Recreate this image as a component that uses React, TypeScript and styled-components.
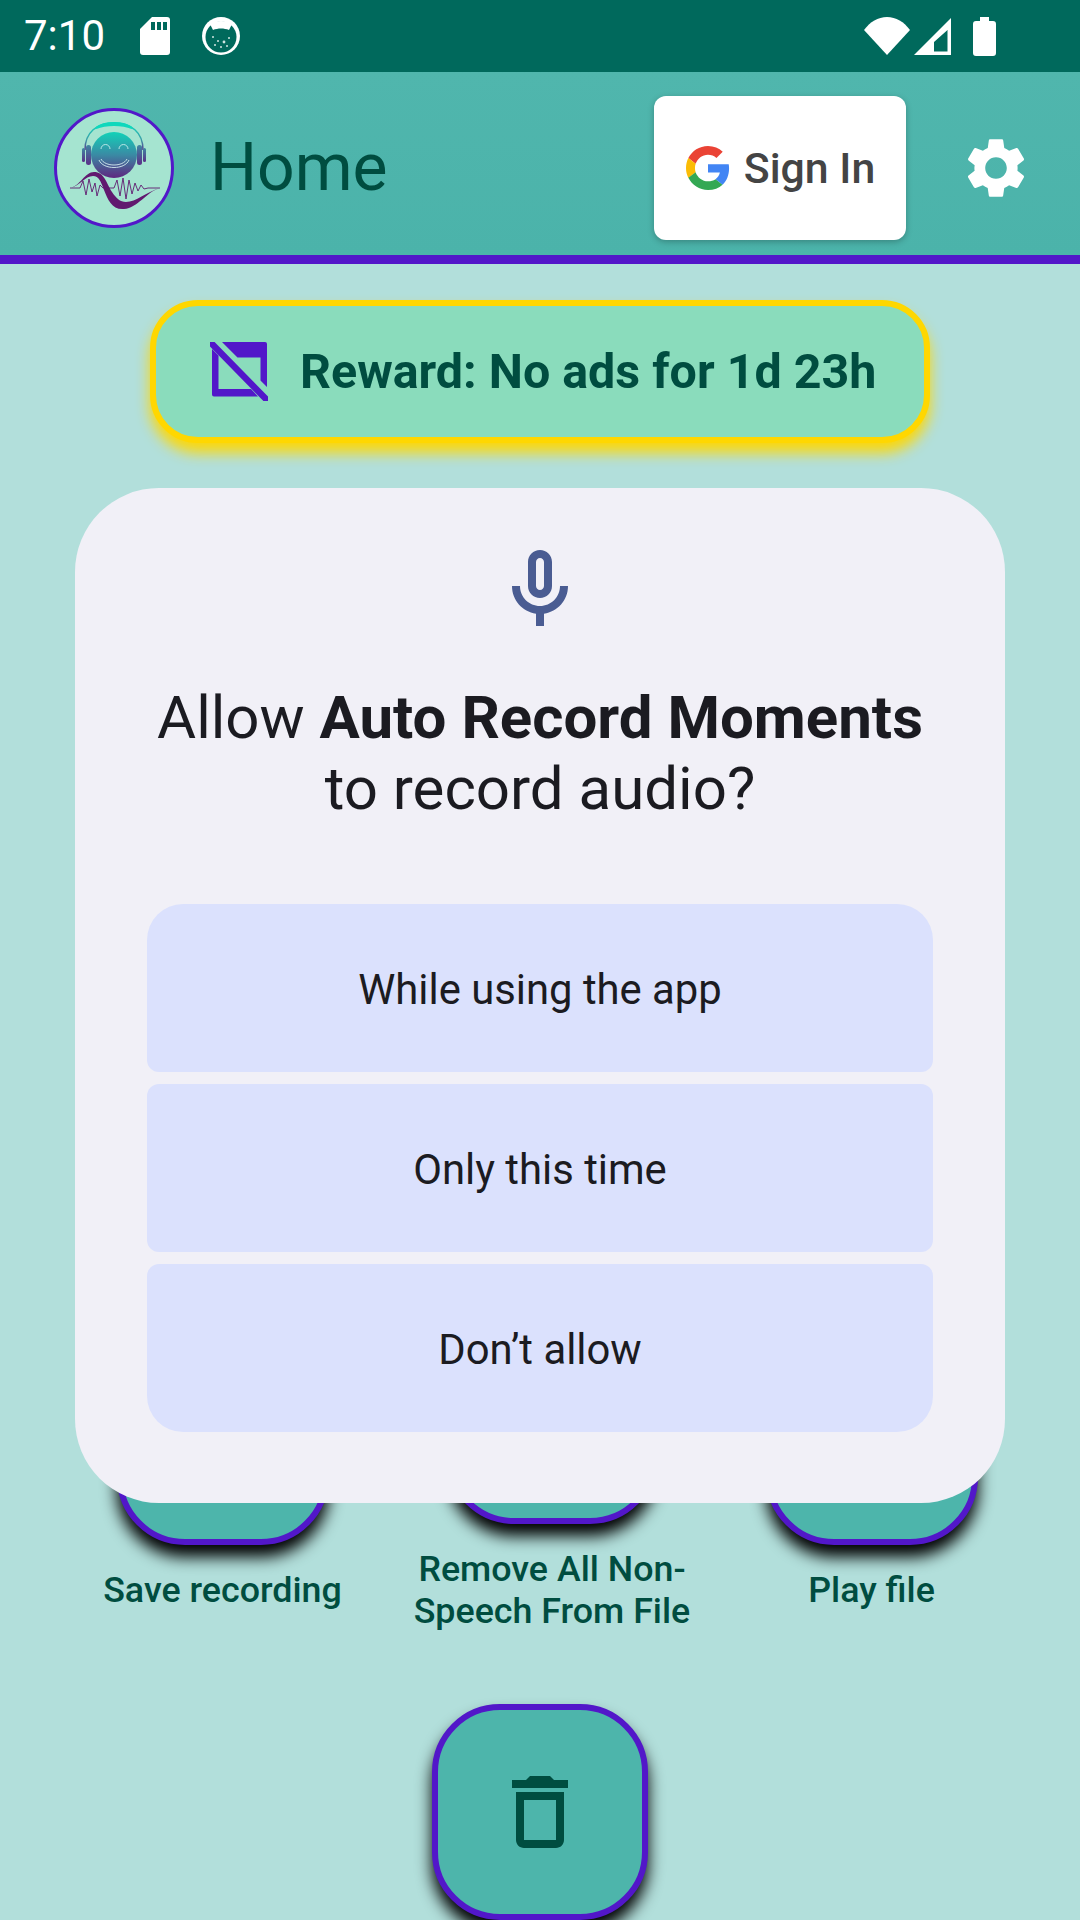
import React from "react";
import styled, { createGlobalStyle } from "styled-components";

const Global = createGlobalStyle`
  html, body { margin: 0; padding: 0; background: #b2dfdb; }
  * { box-sizing: border-box; }
`;

const Screen = styled.div`
  position: relative;
  width: 1080px;
  height: 1920px;
  overflow: hidden;
  background: #b2dfdb;
  font-family: Roboto, "Liberation Sans", sans-serif;
  color: #004d40;
`;

const StatusBar = styled.div`
  height: 72px;
  background: #00695c;
  display: flex;
  align-items: center;
  padding: 0 84px 0 24px;
  color: #fff;
`;

const Clock = styled.span`
  font-size: 42px;
  line-height: 72px;
  width: 116px;
`;

const StatusGroup = styled.div<{ $gap: number; $left?: number }>`
  display: flex;
  align-items: center;
  gap: ${(p) => p.$gap}px;
  margin-left: ${(p) => p.$left ?? 0}px;
`;

const Spacer = styled.div`
  flex: 1;
`;

const AppBar = styled.header`
  height: 192px;
  background: linear-gradient(180deg, #50b6ad, #4bb3aa);
  border-bottom: 9px solid #5217c9;
  display: flex;
  align-items: center;
  padding: 9px 48px 0 54px;
`;

const LogoRing = styled.div`
  width: 120px;
  height: 120px;
  border-radius: 50%;
  border: 3px solid #5217c9;
  background: #a5e4d0;
  overflow: hidden;
  flex: none;
`;

const Title = styled.h1`
  margin: 0 0 2px 36px;
  font-size: 66px;
  font-weight: 400;
  color: #004d40;
  flex: 1;
`;

const SignIn = styled.button`
  width: 252px;
  height: 144px;
  border: 0;
  border-radius: 12px;
  background: #fff;
  box-shadow: 0 2px 6px rgba(0, 0, 0, 0.25);
  display: flex;
  align-items: center;
  justify-content: center;
  gap: 14px;
  padding: 0 0 0 1px;
  margin-right: 54px;
  font-family: inherit;
  font-size: 42.8px;
  font-weight: 500;
  color: #444;
`;

const Main = styled.main`
  display: flex;
  flex-direction: column;
  align-items: center;
  padding-top: 36px;
`;

const Reward = styled.div`
  width: 780px;
  height: 143px;
  border: 6px solid #ffd700;
  border-radius: 48px;
  background: #8adcbc;
  box-shadow: 0 10px 14px rgba(255, 215, 0, 0.95);
  display: flex;
  align-items: center;
  padding-left: 54px;
  gap: 32px;
  font-size: 48.4px;
  font-weight: 700;
  color: #004d40;
`;

const ActionRow = styled.div`
  width: 100%;
  margin-top: 869px;
  padding-left: 60px;
  display: grid;
  grid-template-columns: 325px 334px 305px;
  align-items: end;
`;

const Action = styled.div<{ $lift: number }>`
  display: flex;
  flex-direction: column;
  align-items: center;
  gap: 24px;
  padding-bottom: ${(p) => p.$lift}px;
`;

const RoundButton = styled.button<{ $size: number }>`
  width: ${(p) => p.$size}px;
  height: ${(p) => p.$size}px;
  border: 6px solid #5217c9;
  border-radius: 68px;
  background: #4db5ab;
  box-shadow: 0 12px 16px #000;
  display: flex;
  align-items: center;
  justify-content: center;
  padding: 0;
  flex: none;
`;

const ActionLabel = styled.div`
  font-size: 35.8px;
  line-height: 42px;
  font-weight: 500;
  text-align: center;
  color: #004d40;
`;

const TrashRow = styled.div`
  margin-top: 72px;
`;

const Dialog = styled.div`
  position: absolute;
  left: 75px;
  top: 488px;
  width: 930px;
  height: 1015px;
  border-radius: 84px;
  background: #f1f0f7;
  padding: 54px 72px 0;
  display: flex;
  flex-direction: column;
  align-items: center;
`;

const DialogTitle = styled.h2`
  margin: 44px 0 0;
  font-size: 60px;
  line-height: 71px;
  font-weight: 400;
  text-align: center;
  color: #1b1b21;
  white-space: nowrap;
  b { font-weight: 700; }
`;

const Choices = styled.div`
  width: 100%;
  margin-top: 80px;
  display: flex;
  flex-direction: column;
  gap: 12px;
`;

const Choice = styled.button<{ $first?: boolean; $last?: boolean }>`
  width: 786px;
  height: 168px;
  border: 0;
  padding: 2px 0 0;
  background: #dbe1fd;
  border-radius: ${(p) => (p.$first ? "36px 36px 12px 12px" : p.$last ? "12px 12px 36px 36px" : "12px")};
  font-family: inherit;
  font-size: 41.8px;
  color: #1b1b21;
`;

const Logo = () => (
  <svg width="114" height="114" viewBox="3 3 114 114">
    <defs>
      <linearGradient id="face" x1="0" y1="0" x2="0" y2="1">
        <stop offset="0" stopColor="#12d2b8" />
        <stop offset="0.5" stopColor="#3a8aa4" />
        <stop offset="1" stopColor="#5f2680" />
      </linearGradient>
      <linearGradient id="band" x1="0" y1="0" x2="0" y2="1">
        <stop offset="0" stopColor="#0fd8bc" />
        <stop offset="0.6" stopColor="#3a9fa8" />
        <stop offset="1" stopColor="#5a3a90" />
      </linearGradient>
      <linearGradient id="cup" x1="0" y1="0" x2="0" y2="1">
        <stop offset="0" stopColor="#3f86a2" />
        <stop offset="1" stopColor="#5a2f88" />
      </linearGradient>
    </defs>
    <path d="M31 42C31 24 43 15 60 15s29 9 29 27" fill="none" stroke="url(#band)" strokeWidth="1.5" />
    <path d="M42 20c5-4 11-5 18-5s13 1 18 5c-5-2-11-3-18-3s-13 1-18 3z" fill="#0fd8bc" stroke="#0fd8bc" strokeWidth="2" />
    <rect x="28" y="40" width="3" height="14" rx="1.5" fill="url(#cup)" />
    <rect x="32" y="37" width="5" height="20" rx="2.5" fill="url(#cup)" />
    <rect x="83" y="37" width="5" height="20" rx="2.5" fill="url(#cup)" />
    <rect x="89" y="40" width="3" height="14" rx="1.5" fill="url(#cup)" />
    <circle cx="60" cy="47" r="23" fill="url(#face)" />
    <path d="M47 41a4 4 0 0 1 9 0M65 41a4 4 0 0 1 9 0" fill="none" stroke="#b8e6e6" strokeWidth="1" />
    <path d="M45 52c4 10 26 10 30 0M47 51c4 8 22 8 26 0" fill="none" stroke="#d5eef0" strokeWidth="0.9" />
    <path d="M16 80C26 78 31 64 40 64C50 64 52 74 58 84C62 90 66 94 72 94C82 94 92 84 106 80C92 84 84 100 70 101C58 102 54 92 50 82C47 74 45 68 39 68C31 68 26 78 16 80z" fill="#611a6f" />
    <path d="M16 80H26L29 73L32 87L35 71L38 84L41 75L43 88L46 77L49 80H60L63 72L66 88L69 70L72 91L75 72L78 86L81 75L84 83L87 77L90 81L94 80H106" fill="none" stroke="#611a6f" strokeWidth="0.9" />
  </svg>
);

const SdIcon = () => (
  <svg width="30" height="38" viewBox="0 0 30 38">
    <path d="M12 0H27a3 3 0 0 1 3 3V35a3 3 0 0 1-3 3H3a3 3 0 0 1-3-3V12z" fill="#fff" />
    <path d="M11 5h4v8h-4zM17 5h4v8h-4zM23 5h4v8h-4z" fill="#00695c" />
  </svg>
);

const CatIcon = () => (
  <svg width="38" height="38" viewBox="0 0 38 38">
    <circle cx="19" cy="19" r="19" fill="#fff" />
    <circle cx="19" cy="20" r="15.5" fill="#00695c" />
    <path d="M8 7C14 3 24 3 30 7l-3 6c-5-2-11-2-16 0z" fill="#fff" />
    <g fill="#cfe5e1">
      <circle cx="11" cy="20" r="1" />
      <circle cx="16" cy="24" r="1" />
      <circle cx="22" cy="25" r="1.4" />
      <circle cx="27" cy="21" r="1" />
      <circle cx="19" cy="30" r="1" />
      <circle cx="13" cy="28" r="1" />
      <circle cx="25" cy="29" r="1" />
    </g>
  </svg>
);

const Wifi = () => (
  <svg width="46" height="38" viewBox="0 0 46 38">
    <path d="M0 13C6 5 14 0 23 0s17 5 23 13L23 38z" fill="#fff" />
  </svg>
);

const Signal = () => (
  <svg width="37" height="37" viewBox="0 0 37 37">
    <path fillRule="evenodd" d="M37 0V37H0zM33.5 12L20 24V33.5H33.5z" fill="#fff" />
  </svg>
);

const Battery = () => (
  <svg width="23" height="39" viewBox="0 0 23 39">
    <path d="M7 0h9v4h4a3 3 0 0 1 3 3V36a3 3 0 0 1-3 3H3a3 3 0 0 1-3-3V7a3 3 0 0 1 3-3h4z" fill="#fff" />
  </svg>
);

const GoogleG = () => (
  <svg width="44" height="44" viewBox="0 0 48 48">
    <path fill="#EA4335" d="M24 9.5c3.54 0 6.71 1.22 9.21 3.6l6.85-6.85C35.9 2.38 30.47 0 24 0 14.62 0 6.51 5.38 2.56 13.22l7.98 6.19C12.43 13.72 17.74 9.5 24 9.5z" />
    <path fill="#4285F4" d="M46.98 24.55c0-1.57-.15-3.09-.38-4.55H24v9.02h12.94c-.58 2.96-2.26 5.48-4.78 7.18l7.73 6c4.51-4.18 7.09-10.36 7.09-17.65z" />
    <path fill="#FBBC05" d="M10.53 28.59c-.48-1.45-.76-2.99-.76-4.59s.27-3.14.76-4.59l-7.98-6.19C.92 16.46 0 20.12 0 24c0 3.88.92 7.54 2.56 10.78l7.97-6.19z" />
    <path fill="#34A853" d="M24 48c6.48 0 11.93-2.13 15.89-5.81l-7.73-6c-2.15 1.45-4.92 2.3-8.16 2.3-6.26 0-11.57-4.22-13.47-9.91l-7.98 6.19C6.51 42.62 14.62 48 24 48z" />
  </svg>
);

const Gear = () => (
  <svg width="72" height="72" viewBox="0 0 24 24">
    <path fill="#fff" d="M19.14 12.94c.04-.3.06-.61.06-.94 0-.32-.02-.64-.07-.94l2.03-1.58c.18-.14.23-.41.12-.61l-1.92-3.32c-.12-.22-.37-.29-.59-.22l-2.39.96c-.5-.38-1.03-.7-1.62-.94l-.36-2.54c-.04-.24-.24-.41-.48-.41h-3.84c-.24 0-.43.17-.47.41l-.36 2.54c-.59.24-1.13.57-1.62.94l-2.39-.96c-.22-.08-.47 0-.59.22L2.74 8.87c-.12.21-.08.47.12.61l2.03 1.58c-.05.3-.09.63-.09.94s.02.64.07.94l-2.03 1.58c-.18.14-.23.41-.12.61l1.92 3.32c.12.22.37.29.59.22l2.39-.96c.5.38 1.03.7 1.62.94l.36 2.54c.05.24.24.41.48.41h3.84c.24 0 .44-.17.47-.41l.36-2.54c.59-.24 1.13-.56 1.62-.94l2.39.96c.22.08.47 0 .59-.22l1.92-3.32c.12-.22.07-.47-.12-.61l-2.01-1.58zM12 15.6c-1.98 0-3.6-1.62-3.6-3.6s1.62-3.6 3.6-3.6 3.6 1.62 3.6 3.6-1.62 3.6-3.6 3.6z" />
  </svg>
);

const NoAds = () => (
  <svg width="58" height="59" viewBox="0 0 58 59">
    <path d="M12 0H55a2 2 0 0 1 2 2V45L50.5 38.5V15.5H27.5z" fill="#5217c9" />
    <path d="M2 7L8.5 13.5V47H41L48 54.5H4a2 2 0 0 1-2-2z" fill="#5217c9" />
    <path d="M2 2L56 57" stroke="#5217c9" strokeWidth="6.5" strokeLinecap="round" />
  </svg>
);

const Mic = () => (
  <svg width="96" height="96" viewBox="0 0 24 24">
    <path fill="#4a5c92" d="M12 14c1.66 0 3-1.34 3-3V5c0-1.66-1.34-3-3-3S9 3.34 9 5v6c0 1.66 1.34 3 3 3zm-1-9c0-.55.45-1 1-1s1 .45 1 1v6c0 .55-.45 1-1 1s-1-.45-1-1V5zm6 6c0 2.76-2.24 5-5 5s-5-2.24-5-5H5c0 3.53 2.61 6.43 6 6.92V21h2v-3.08c3.39-.49 6-3.39 6-6.92h-2z" />
  </svg>
);

const Trash = () => (
  <svg width="96" height="96" viewBox="0 0 24 24">
    <path fill="#004d40" d="M6 19c0 1.1.9 2 2 2h8c1.1 0 2-.9 2-2V7H6v12zM8 9h8v10H8V9zm7.5-5l-1-1h-5l-1 1H5v2h14V4h-3.5z" />
  </svg>
);

export default function App() {
  return (
    <Screen>
      <Global />
      <StatusBar>
        <Clock>7:10</Clock>
        <StatusGroup $gap={32}>
          <SdIcon />
          <CatIcon />
        </StatusGroup>
        <Spacer />
        <StatusGroup $gap={4}>
          <Wifi />
          <Signal />
        </StatusGroup>
        <StatusGroup $gap={0} $left={22}>
          <Battery />
        </StatusGroup>
      </StatusBar>
      <AppBar>
        <LogoRing>
          <Logo />
        </LogoRing>
        <Title>Home</Title>
        <SignIn>
          <GoogleG />
          Sign In
        </SignIn>
        <Gear />
      </AppBar>
      <Main>
        <Reward>
          <NoAds />
          Reward: No ads for 1d 23h
        </Reward>
        <ActionRow>
          <Action $lift={21}>
            <RoundButton $size={212} />
            <ActionLabel>Save recording</ActionLabel>
          </Action>
          <Action $lift={0}>
            <RoundButton $size={212} />
            <ActionLabel>
              Remove All Non-
              <br />
              Speech From File
            </ActionLabel>
          </Action>
          <Action $lift={21}>
            <RoundButton $size={212} />
            <ActionLabel>Play file</ActionLabel>
          </Action>
        </ActionRow>
        <TrashRow>
          <RoundButton $size={216}>
            <Trash />
          </RoundButton>
        </TrashRow>
      </Main>
      <Dialog>
        <Mic />
        <DialogTitle>
          Allow <b>Auto Record Moments</b>
          <br />
          to record audio?
        </DialogTitle>
        <Choices>
          <Choice $first>While using the app</Choice>
          <Choice>Only this time</Choice>
          <Choice $last>Don’t allow</Choice>
        </Choices>
      </Dialog>
    </Screen>
  );
}
